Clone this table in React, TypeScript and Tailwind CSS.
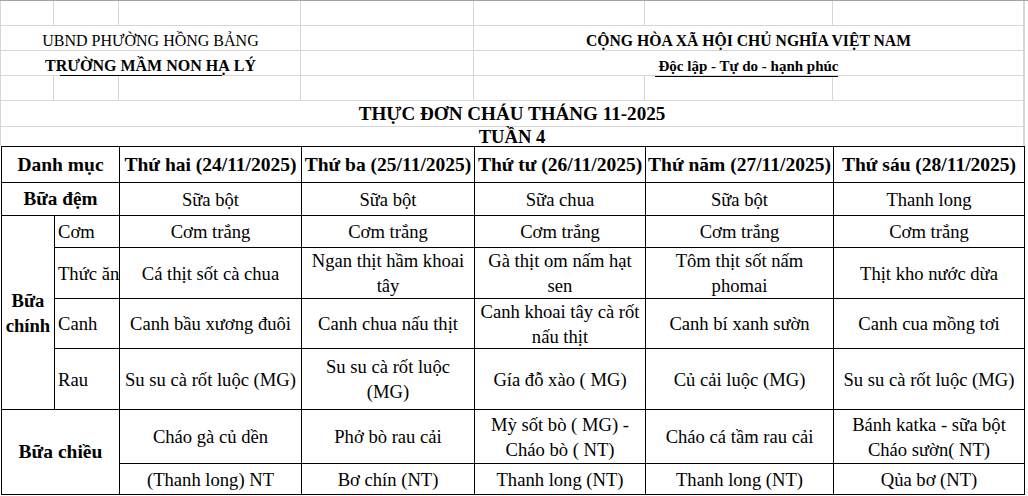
import React from "react";

const serif = { fontFamily: '"Liberation Serif", "Times New Roman", serif' };

type Cell = string | string[];

function Lines({ v }: { v: Cell }) {
  const arr = Array.isArray(v) ? v : [v];
  return (
    <>
      {arr.map((l, i) => (
        <span key={i} className="block whitespace-nowrap">
          {l}
        </span>
      ))}
    </>
  );
}

function D({ v }: { v: Cell }) {
  return (
    <div className="bg-white flex flex-col items-center justify-center text-center leading-[25px] overflow-hidden">
      <Lines v={v} />
    </div>
  );
}

function L({ v }: { v: string }) {
  return (
    <div className="bg-white flex items-center pl-[3px] leading-[25px] overflow-hidden whitespace-nowrap">
      {v}
    </div>
  );
}

export default function App() {
  const headers = [
    "Thứ hai (24/11/2025)",
    "Thứ ba (25/11/2025)",
    "Thứ tư (26/11/2025)",
    "Thứ năm (27/11/2025)",
    "Thứ sáu (28/11/2025)",
  ];
  const dem: Cell[] = ["Sữa bột", "Sữa bột", "Sữa chua", "Sữa bột", "Thanh long"];
  const com: Cell[] = ["Cơm trắng", "Cơm trắng", "Cơm trắng", "Cơm trắng", "Cơm trắng"];
  const thucan: Cell[] = [
    "Cá thịt sốt cà chua",
    ["Ngan thịt hầm khoai", "tây"],
    ["Gà thịt om nấm hạt", "sen"],
    ["Tôm thịt sốt nấm", "phomai"],
    "Thịt kho nước dừa",
  ];
  const canh: Cell[] = [
    "Canh bầu xương đuôi",
    "Canh chua nấu thịt",
    ["Canh khoai tây cà rốt", "nấu thịt"],
    "Canh bí xanh sườn",
    "Canh cua mồng tơi",
  ];
  const rau: Cell[] = [
    "Su su cà rốt luộc (MG)",
    ["Su su cà rốt luộc", "(MG)"],
    "Gía đỗ xào ( MG)",
    "Củ cải luộc (MG)",
    "Su su cà rốt luộc (MG)",
  ];
  const chieu1: Cell[] = [
    "Cháo gà củ dền",
    "Phở bò rau cải",
    ["Mỳ sốt bò ( MG) -", "Cháo bò ( NT)"],
    "Cháo cá tầm rau cải",
    ["Bánh katka - sữa bột", "Cháo sườn( NT)"],
  ];
  const chieu2: Cell[] = [
    "(Thanh long) NT",
    "Bơ chín (NT)",
    "Thanh long (NT)",
    "Thanh long (NT)",
    "Qủa bơ (NT)",
  ];

  const cols = "grid-cols-[52px_64px_181px_172px_170px_187px_190px]";

  return (
    <div className="w-[1028px] h-[496px] bg-white text-black overflow-hidden relative" style={serif}>
      {/* spreadsheet header area */}
      <div className="border-t border-[#a3a3a3]">
        <div
          className={
            "w-[1025px] grid gap-px px-px bg-[#d6d6d6] grid-rows-[24px_24px_24px_24px_25px_19px] " +
            cols
          }
        >
          {Array.from({ length: 7 }).map((_, i) => (
            <div key={"r1" + i} className="bg-white" />
          ))}
          <div className="col-span-3 bg-white flex items-end justify-center text-[16px] leading-[18px]">
            UBND PHƯỜNG HỒNG BẢNG
          </div>
          <div className="bg-white" />
          <div className="col-span-3 bg-white flex items-end justify-center text-[15.7px] font-bold leading-[18px]">
            CỘNG HÒA XÃ HỘI CHỦ NGHĨA VIỆT NAM
          </div>
          <div className="col-span-3 bg-white flex items-end justify-center text-[16px] font-bold leading-[18px]">
            TRƯỜNG MẦM NON HẠ LÝ
          </div>
          <div className="bg-white" />
          <div className="col-span-3 bg-white flex items-end justify-center text-[15px] font-bold leading-[18px]">
            Độc lập - Tự do - hạnh phúc
          </div>
          {Array.from({ length: 7 }).map((_, i) => (
            <div key={"r4" + i} className="bg-white" />
          ))}
          <div className="col-span-7 bg-white flex items-center justify-center text-[19.1px] font-bold leading-[24px]">
            THỰC ĐƠN CHÁU THÁNG 11-2025
          </div>
          <div className="col-span-7 bg-white flex items-center justify-center text-[18.6px] font-bold leading-[19px]">
            TUẦN 4
          </div>
        </div>
      </div>

      {/* underline shapes */}
      <div className="absolute left-[60px] top-[75px] w-[162px] h-px bg-black" />
      <div className="absolute left-[655px] top-[76px] w-[183px] h-px bg-black" />

      {/* menu table */}
      <div
        className={
          "ml-px w-[1024px] grid gap-px p-px bg-black text-[18.6px] grid-rows-[35px_32px_31px_50px_49px_60px_53px_30px] " +
          cols
        }
      >
        <div className="col-span-2 bg-white flex items-center justify-center font-bold text-[19.5px]">Danh mục</div>
        {headers.map((h) => (
          <div
            key={h}
            className="bg-white flex items-center justify-center font-bold text-[19.5px] whitespace-nowrap overflow-hidden"
          >
            {h}
          </div>
        ))}

        <div className="col-span-2 bg-white flex items-center justify-center font-bold text-[19.2px]">Bữa đệm</div>
        {dem.map((v, i) => (
          <D key={"dem" + i} v={v} />
        ))}

        <div className="row-span-4 bg-white flex flex-col items-center justify-center font-bold leading-[25px] text-center">
          <span>Bữa</span>
          <span>chính</span>
        </div>
        <L v="Cơm" />
        {com.map((v, i) => (
          <D key={"com" + i} v={v} />
        ))}
        <L v="Thức ăn" />
        {thucan.map((v, i) => (
          <D key={"ta" + i} v={v} />
        ))}
        <L v="Canh" />
        {canh.map((v, i) => (
          <D key={"canh" + i} v={v} />
        ))}
        <L v="Rau" />
        {rau.map((v, i) => (
          <D key={"rau" + i} v={v} />
        ))}

        <div className="col-span-2 row-span-2 bg-white flex items-center justify-center font-bold text-[19.5px]">
          Bữa chiều
        </div>
        {chieu1.map((v, i) => (
          <D key={"c1" + i} v={v} />
        ))}
        {chieu2.map((v, i) => (
          <D key={"c2" + i} v={v} />
        ))}
      </div>
    </div>
  );
}
